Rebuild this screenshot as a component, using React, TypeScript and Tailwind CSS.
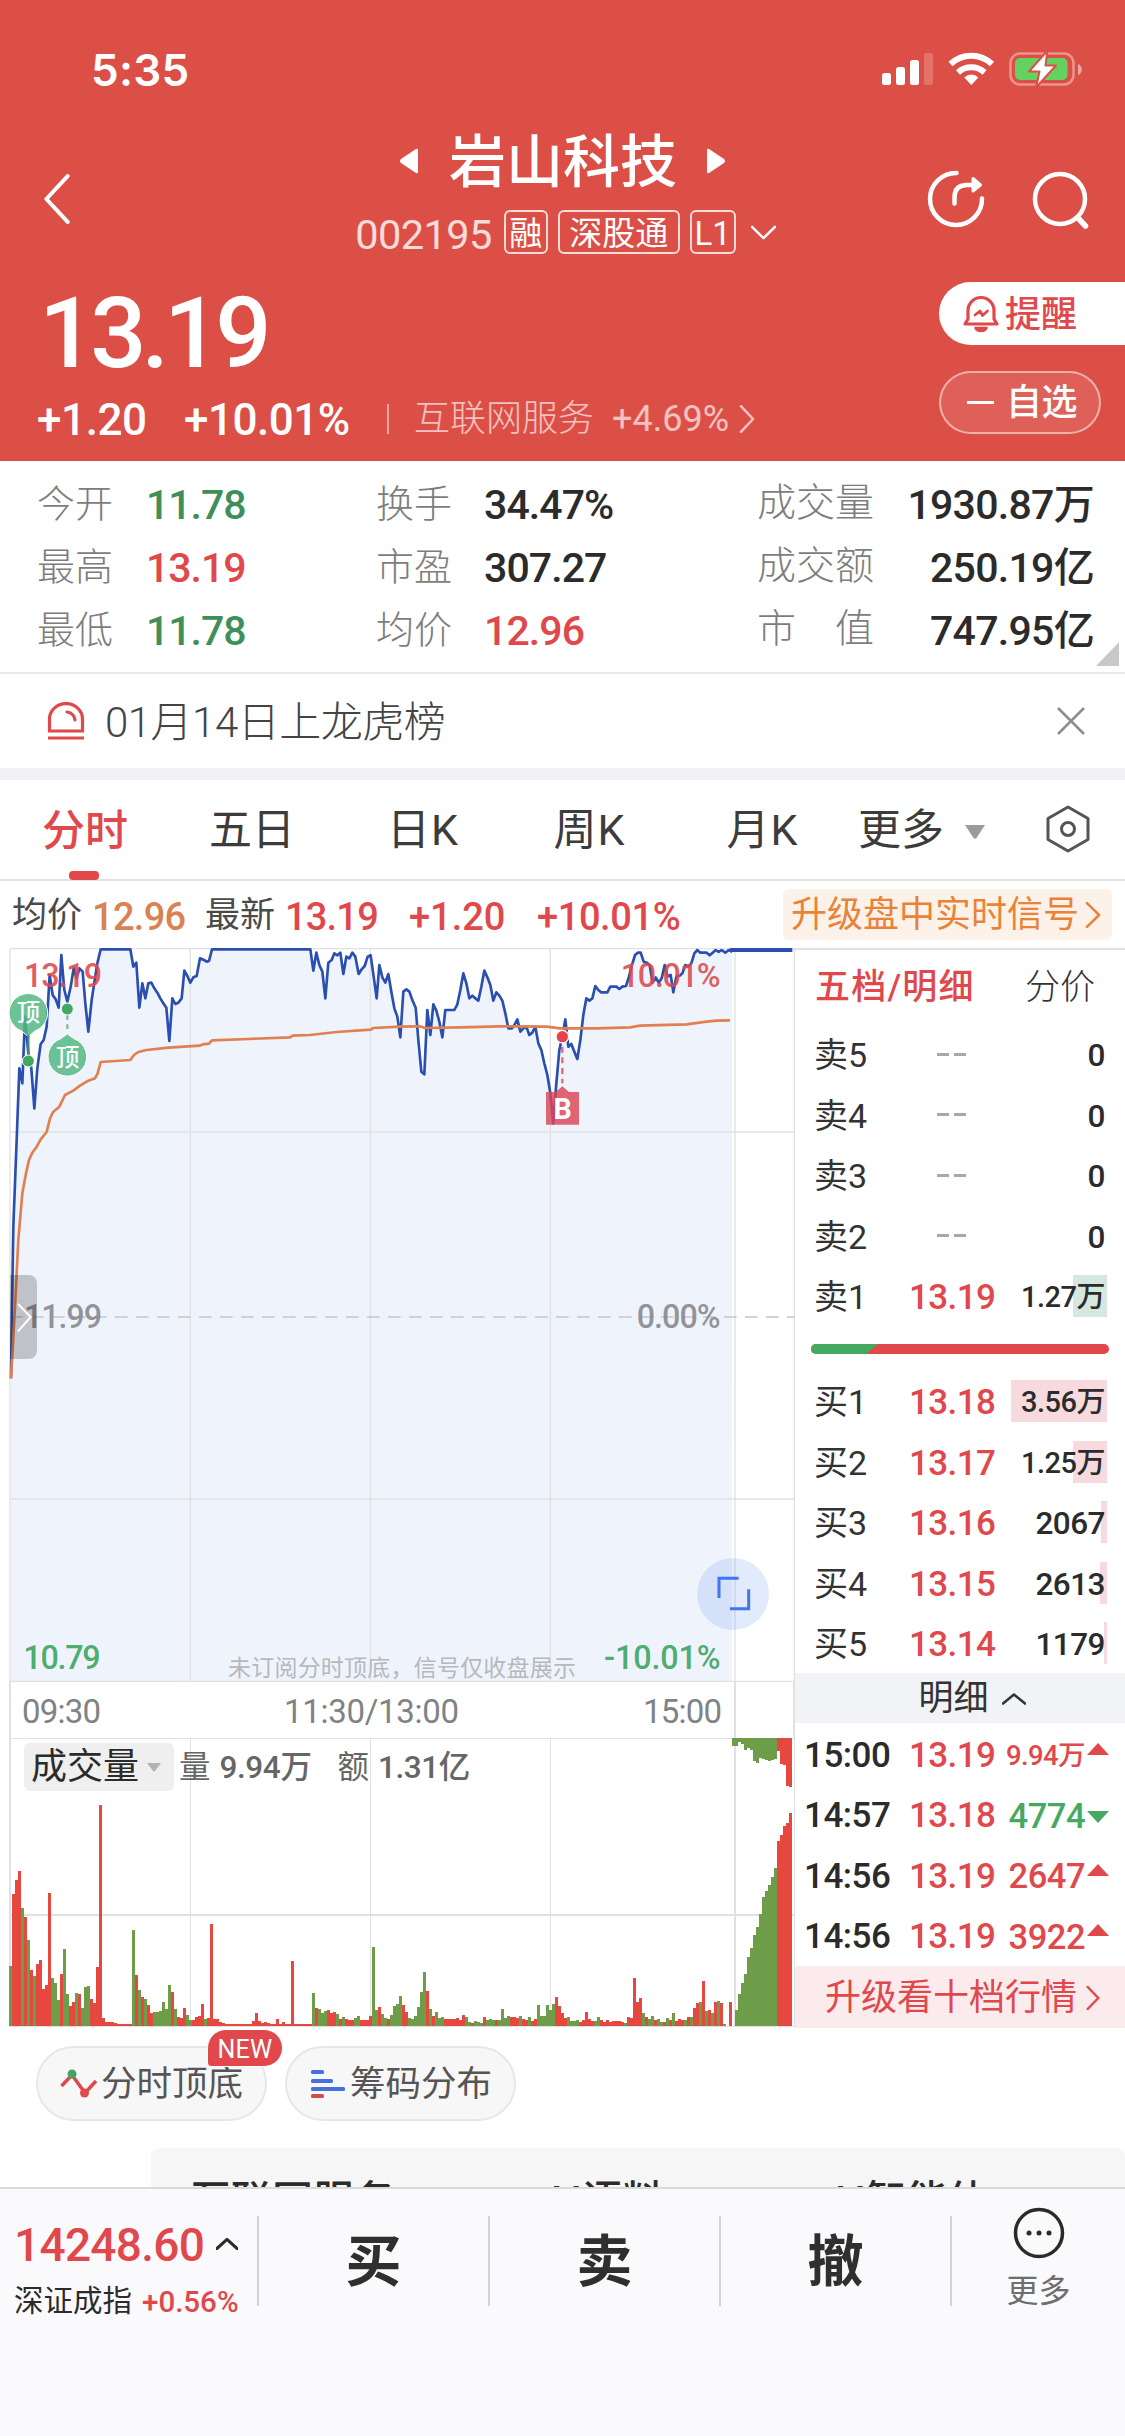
import type { ReactNode } from 'react'

type Tone = 'red' | 'green' | 'dark'

const toneClass: Record<Tone, string> = {
  red: 'text-[#e0484b]',
  green: 'text-[#3f8f5a]',
  dark: 'text-[#2b2b2b]',
}

// 行情概览
const stats: { label: string; value: string; tone: Tone }[][] = [
  [
    { label: '今开', value: '11.78', tone: 'green' },
    { label: '换手', value: '34.47%', tone: 'dark' },
    { label: '成交量', value: '1930.87万', tone: 'dark' },
  ],
  [
    { label: '最高', value: '13.19', tone: 'red' },
    { label: '市盈', value: '307.27', tone: 'dark' },
    { label: '成交额', value: '250.19亿', tone: 'dark' },
  ],
  [
    { label: '最低', value: '11.78', tone: 'green' },
    { label: '均价', value: '12.96', tone: 'red' },
    { label: '市　值', value: '747.95亿', tone: 'dark' },
  ],
]

const asks = [
  { label: '卖5', price: '--', vol: '0', bar: 0 },
  { label: '卖4', price: '--', vol: '0', bar: 0 },
  { label: '卖3', price: '--', vol: '0', bar: 0 },
  { label: '卖2', price: '--', vol: '0', bar: 0 },
  { label: '卖1', price: '13.19', vol: '1.27万', bar: 34 },
]

const bids = [
  { label: '买1', price: '13.18', vol: '3.56万', bar: 96 },
  { label: '买2', price: '13.17', vol: '1.25万', bar: 34 },
  { label: '买3', price: '13.16', vol: '2067', bar: 6 },
  { label: '买4', price: '13.15', vol: '2613', bar: 7 },
  { label: '买5', price: '13.14', vol: '1179', bar: 3 },
]

const ticks = [
  { time: '15:00', price: '13.19', vol: '9.94万', up: true },
  { time: '14:57', price: '13.18', vol: '4774', up: false },
  { time: '14:56', price: '13.19', vol: '2647', up: true },
  { time: '14:56', price: '13.19', vol: '3922', up: true },
]

// 分时线，单位为 1/3 像素
const pricePoints =
  '33,1315 36,1100 40,860 50,600 58,385 67,430 75,230 85,340 94,385 103,505 112,385 122,312 131,300 140,260 149,105 158,165 167,178 176,203 184,45 193,150 202,185 212,140 221,85 230,115 238,85 248,95 256,190 265,275 275,180 285,115 292,70 302,28 391,28 400,80 409,68 418,203 427,130 436,175 445,130 454,128 463,145 472,158 481,175 490,190 499,203 508,303 517,175 526,192 535,188 545,175 553,92 562,108 571,128 580,112 590,108 600,55 612,60 620,65 627,63 636,28 931,28 940,92 949,38 958,75 967,95 976,175 985,68 995,60 1003,40 1012,46 1021,38 1030,102 1039,50 1048,55 1057,38 1066,50 1076,102 1085,88 1094,78 1103,50 1112,46 1121,110 1130,175 1138,75 1147,112 1156,128 1165,102 1174,155 1183,205 1192,230 1201,292 1210,155 1219,148 1228,155 1237,180 1247,203 1255,300 1264,395 1273,403 1282,210 1291,285 1300,193 1309,212 1318,245 1327,292 1336,210 1363,210 1372,193 1381,150 1390,100 1399,130 1408,175 1417,167 1426,175 1435,182 1444,140 1453,92 1462,112 1471,135 1480,182 1489,157 1498,167 1507,182 1516,220 1525,265 1536,265 1543,255 1552,238 1561,275 1570,265 1579,260 1588,285 1597,278 1606,260 1615,310 1624,330 1633,370 1642,405 1651,460 1660,550 1669,430 1678,330 1687,290 1696,238 1705,320 1714,312 1723,335 1732,357 1741,300 1750,225 1759,175 1768,182 1777,175 1786,138 1795,150 1804,157 1822,157 1831,140 1849,140 1858,147 1867,140 1878,138 1887,110 1896,75 1905,45 1914,38 1922,38 1931,65 1940,68 1949,75 1958,128 1967,112 1976,128 1985,115 1994,75 2003,110 2012,105 2020,157 2029,110 2038,108 2047,100 2056,75 2065,80 2074,70 2083,40 2092,30 2101,38 2120,38 2129,46 2138,38 2147,30 2156,36 2165,30 2176,38 2186,30 2197,35'

const avgPoints =
  '33,1315 45,1100 55,900 67,760 78,700 87,660 96,640 110,620 122,598 140,576 150,535 160,515 178,500 195,465 220,452 240,437 265,422 285,415 293,400 302,366 391,360 402,345 415,336 440,330 505,323 600,317 608,313 627,311 636,301 745,297 870,292 878,287 930,285 1010,276 1112,269 1120,264 1200,260 1260,259 1275,264 1380,262 1500,259 1640,260 1680,265 1790,265 1890,262 1920,257 2060,253 2120,245 2150,242 2190,241'

// 每分钟成交量：颜色 + 柱高（1/3 像素）
const volumeBars =
  'g180 r396 r438 r466 g355 r328 g257 r167 g151 r186 r197 r112 r124 r399 g145 g128 g78 r156 g231 g96 r60 r72 g99 r96 g54 g118 g120 r82 r70 r176 r664 r23 r12 r12 r12 r9 r7 r7 r7 r7 r7 g288 r154 g109 r86 g80 r62 r40 g42 g42 g45 g73 g52 g122 r103 g50 r26 r23 r54 g33 g19 r19 r27 r30 r65 g22 r24 r306 r21 r21 r11 r9 r7 r7 r7 r7 r7 r7 r7 r7 r7 r15 r39 r15 r9 r12 r8 r7 r7 r22 r7 r12 r7 r7 r195 r7 r7 r7 r7 r7 r7 g98 r54 g51 g39 g44 r48 r38 r42 g36 r21 g27 r21 r18 r19 g24 g29 r17 r17 r17 r29 g238 g48 r57 g36 g24 r21 g33 g60 g66 g89 r63 r42 g24 g21 g31 g57 g102 g162 r105 g51 r29 g42 g23 g26 r20 r20 r20 r20 r24 r18 r33 g27 g12 r10 g14 g12 g10 r27 g18 g20 g19 r17 g17 g50 g24 g30 r26 r26 r25 g31 r22 r18 g27 r15 r20 g64 g30 g30 g63 g47 g65 r87 r60 r38 r25 g27 g14 g16 g19 r13 r18 r42 r20 r15 g14 g27 r18 r13 r17 r11 r16 r16 r14 r12 g10 r26 r24 r144 r72 r85 g40 r28 g22 g31 r18 g20 g13 r12 g25 r18 g39 r15 r22 r18 g17 r27 g28 r53 r68 g72 r136 g44 r48 g40 r72 g76 r68 g6 r0 r72'.split(' ')

// 收盘集合竞价
const auctionBars = 'g48 g96 g129 g156 g208 g234 g274 g296 g337 g386 g404 g424 g447 g474 r556 r574 r600 r610 r640'.split(' ')
const auctionTop = 'g25 g25 g13 g18 g37 g31 g37 g68 g75 g60 g62 g66 g70 g66 g64 r40 r78 r82 r144 r146'.split(' ')

const barFill = (bar: string) => (bar[0] === 'r' ? '#e6483f' : '#6d9d48')
const barSize = (bar: string) => Number(bar.slice(1))

function Chevron({ dir, className, stroke = 3 }: { dir: 'left' | 'right' | 'up' | 'down'; className: string; stroke?: number }) {
  const d = {
    left: 'M22 2L3 24L22 46',
    right: 'M3 2L22 24L3 46',
    up: 'M2 22L24 3L46 22',
    down: 'M2 3L24 22L46 3',
  }[dir]
  const tall = dir === 'left' || dir === 'right'
  return (
    <svg className={className} viewBox={tall ? '0 0 25 48' : '0 0 48 25'} preserveAspectRatio="none" fill="none">
      <path d={d} stroke="currentColor" strokeWidth={stroke} strokeLinecap="round" strokeLinejoin="round" vectorEffect="non-scaling-stroke" />
    </svg>
  )
}

function StatusBar() {
  return (
    <div className="flex h-[138px] items-center justify-between pl-[91px] pr-[42px]">
      <div className="pt-px font-['Inter'] text-[44px] font-semibold leading-none tracking-[0.3px]">5:35</div>
      <svg className="h-[40px] w-[202px]" viewBox="881 49 202 40" fill="none">
        <rect x="882" y="73" width="9" height="12" rx="2.5" fill="#fff" />
        <rect x="896" y="67" width="9" height="18" rx="2.5" fill="#fff" />
        <rect x="910" y="60" width="9" height="25" rx="2.5" fill="#fff" />
        <rect x="924" y="53" width="9" height="32" rx="2.5" fill="#fff" opacity=".2" />
        <path d="M950.500 64a30 30 0 0 1 41.500 0M958 72.500a19.500 19.500 0 0 1 26.500 0" stroke="#fff" strokeWidth="6" />
        <path d="M971.300 85l-7-7.500a9.700 9.700 0 0 1 14 0z" fill="#fff" />
        <rect x="1010.500" y="53.500" width="63" height="31" rx="9.500" stroke="#fff" strokeOpacity=".4" strokeWidth="2.500" />
        <path d="M1078 64c5 1.500 5 9.500 0 11z" fill="#fff" opacity=".5" />
        <rect x="1015" y="58" width="52.500" height="22" rx="5" fill="#65d15f" />
        <path d="M1047.500 50.500L1029 71.500h10.500L1036 87.500l20-22h-10.500z" fill="#fff" stroke="#dc4f47" strokeWidth="2" strokeLinejoin="round" />
      </svg>
    </div>
  )
}

function Tag({ children, className }: { children: ReactNode; className: string }) {
  return (
    <span className={`flex h-[44px] items-center justify-center rounded-[6px] border-2 border-white/80 pt-[3px] text-[33px] leading-none ${className}`}>
      {children}
    </span>
  )
}

function Header() {
  return (
    <header className="h-[461px] bg-[#dc4f47] text-white">
      <StatusBar />
      <div className="flex h-[122px] items-start justify-between pl-[43px] pr-[34px]">
        <div className="flex h-full w-[300px] items-center">
          <Chevron dir="left" className="h-[50px] w-[28px]" stroke={4} />
        </div>
        <div className="flex flex-col items-center">
          <div className="flex h-[46px] items-center">
            <svg className="h-[26px] w-[20px]" viewBox="0 0 20 26">
              <path d="M19 2v22q0 2-2 1L2 15q-2-2 0-4L17 1q2-1 2 1z" fill="#fff" />
            </svg>
            <h1 className="ml-[30px] mr-[29px] pt-[3px] text-[57px] font-medium leading-none">岩山科技</h1>
            <svg className="h-[26px] w-[20px]" viewBox="0 0 20 26">
              <path d="M1 2v22q0 2 2 1L18 15q2-2 0-4L3 1Q1 0 1 2z" fill="#fff" />
            </svg>
          </div>
          <div className="ml-[6px] mt-[25px] flex items-center">
            <span className="pt-[5px] text-[41.500px] leading-none tracking-[-0.6px] text-white/80">002195</span>
            <Tag className="ml-[12px] w-[44px]">融</Tag>
            <Tag className="ml-[10px] w-[122px]">深股通</Tag>
            <Tag className="ml-[10px] w-[46px]">L1</Tag>
            <Chevron dir="down" className="ml-[15px] h-[15px] w-[25px]" stroke={2.500} />
          </div>
        </div>
        <div className="flex h-full w-[309px] items-center justify-end gap-[42px]">
          <svg className="h-[62px] w-[62px]" viewBox="926 167 62 62" fill="none" stroke="#fff" strokeWidth="4.500" strokeLinecap="round" strokeLinejoin="round">
            <path d="M957.500 172A26 26 0 1 0 983 197.500" />
            <path d="M955.500 202.500v-6q0-12.500 12.500-12.500h8" />
            <path d="M974 177.500l7.500 6.500-7.500 6z" fill="#fff" strokeWidth="3" />
          </svg>
          <svg className="h-[62px] w-[62px]" viewBox="1028 168 62 62" fill="none" stroke="#fff" strokeWidth="4.500" strokeLinecap="round">
            <circle cx="1059" cy="199" r="25" />
            <path d="M1077 218l7.500 8" strokeWidth="5.500" />
          </svg>
        </div>
      </div>
      <div className="flex justify-between">
        <div className="pt-[24px]">
          <div className="pl-[39px] text-[99px] font-medium leading-[98px] tracking-[-5px]">13.19</div>
          <div className="mt-[15px] flex h-[46px] items-center pl-[37px] leading-none">
            <span className="w-[147px] text-[44px] font-medium tracking-[-0.4px]">+1.20</span>
            <span className="w-[203px] text-[44px] font-medium tracking-[-0.5px]">+10.01%</span>
            <i className="-mt-[3px] h-[30px] w-[2px] bg-white/50" />
            <div className="-mt-[2px] ml-[25px] flex items-center text-white/65">
              <span className="text-[36px] font-light">互联网服务</span>
              <span className="ml-[18px] text-[36px]">+4.69%</span>
              <Chevron dir="right" className="ml-[10px] h-[28px] w-[16px]" stroke={2.500} />
            </div>
          </div>
        </div>
        <div className="w-[186px] pt-[22px]">
          <div className="flex h-[63px] items-center rounded-l-full bg-white pl-[24px] text-[#e0484b]">
            <svg className="h-[38px] w-[36px]" viewBox="0 0 36 38" fill="none" stroke="currentColor" strokeWidth="3.200" strokeLinecap="round" strokeLinejoin="round">
              <path d="M5 24V15.500a13 13 0 0 1 26 0V24l3 5H2z" />
              <path d="M12 32.500a6 4 0 0 0 12 0z" fill="currentColor" strokeWidth="1.500" />
              <path d="M12 20l5-4 2.500 4.500 5-4.500" strokeWidth="2.800" />
            </svg>
            <span className="ml-[6px] pt-[2px] text-[36px] font-medium leading-none">提醒</span>
          </div>
          <div className="mt-[26px] flex h-[63px] w-[162px] items-center rounded-full border-2 border-white/50 bg-white/10 pl-[26px]">
            <i className="h-[3px] w-[27px] bg-white" />
            <span className="ml-[12px] pt-px text-[36px] font-medium leading-none tracking-[-0.5px]">自选</span>
          </div>
        </div>
      </div>
    </header>
  )
}

function Stats() {
  return (
    <section className="relative h-[213px] border-b-2 border-[#e9e9e9] pt-[11px]">
      {stats.map((row, i) => (
        <div key={i} className="flex h-[63px] items-center pl-[37px] pr-[31px] leading-none">
          <span className="w-[109px] text-[38px] font-light text-[#7d7d7d]">{row[0].label}</span>
          <span className={`w-[230px] pt-[3px] text-[41px] font-medium tracking-[-1px] ${toneClass[row[0].tone]}`}>{row[0].value}</span>
          <span className="w-[108px] text-[38px] font-light text-[#7d7d7d]">{row[1].label}</span>
          <span className={`w-[273px] pt-[3px] text-[41px] font-medium tracking-[-0.9px] ${toneClass[row[1].tone]}`}>{row[1].value}</span>
          <span className="text-[39px] font-light text-[#7d7d7d]">{row[2].label}</span>
          <span className={`ml-auto pt-[3px] text-[41px] font-medium tracking-[-0.7px] ${toneClass[row[2].tone]}`}>{row[2].value}</span>
        </div>
      ))}
      <svg className="absolute bottom-[6px] right-[6px] h-[24px] w-[23px]" viewBox="0 0 23 24">
        <path d="M23 0v24H0z" fill="#c8c8c8" />
      </svg>
    </section>
  )
}

function Notice() {
  return (
    <div className="flex h-[106px] items-center border-b-[12px] border-[#f1f2f5] pl-[47px] pr-[40px]">
      <svg className="h-[38px] w-[38px]" viewBox="0 0 38 38" fill="none" stroke="#e0484b" strokeWidth="3.200">
        <path d="M2.500 29V17a16 15 0 0 1 33 0v12zM1 36h36" />
        <path d="M20 10q7 1 8 8" strokeLinecap="round" />
      </svg>
      <span className="ml-[20px] pt-[3px] text-[42px] font-light leading-none tracking-[-0.5px] text-[#444]">01月14日上龙虎榜</span>
      <svg className="ml-auto h-[28px] w-[28px]" viewBox="0 0 28 28" stroke="#8d8d8d" strokeWidth="2.500">
        <path d="M1 1l26 26M27 1L1 27" />
      </svg>
    </div>
  )
}

function Tabs() {
  return (
    <nav className="flex h-[101px] items-center border-b-2 border-[#e1e1e1] pt-[2px] text-[43px] leading-none text-[#3c3c3c]">
      <div className="relative -mt-[2px] flex h-[101px] w-[170px] items-center justify-center pt-[4px] font-medium text-[#e0484b]">
        分时
        <i className="absolute bottom-0 left-[69px] h-[9px] w-[30px] rounded-[4px] bg-[#e0484b]" />
      </div>
      <div className="w-[164px] text-center">五日</div>
      <div className="w-[178px] text-center tracking-[1px]">日K</div>
      <div className="w-[155px] text-center tracking-[1px]">周K</div>
      <div className="w-[191px] text-center tracking-[1px]">月K</div>
      <div className="w-[88px]">更多</div>
      <svg className="ml-[18px] mt-[2px] h-[14px] w-[22px]" viewBox="0 0 22 14">
        <path d="M1 0h20L12.500 13q-1.500 1.500-3 0z" fill="#9b9b9b" />
      </svg>
      <svg className="-mt-[3px] ml-[60px] h-[48px] w-[44px]" viewBox="0 0 44 48" fill="none" stroke="#555" strokeWidth="3">
        <path d="M22 2l20 11.500v21L22 46 2 34.500v-21z" strokeLinejoin="round" />
        <circle cx="22" cy="24" r="6.500" />
      </svg>
    </nav>
  )
}

function QuoteLine() {
  return (
    <div className="flex h-[67px] items-center pl-[12px] pr-[13px] text-[35px] leading-none">
      <span className="w-[80px] pt-px text-[#4a4a4a]">均价</span>
      <span className="w-[113px] pt-[4px] text-[38px] font-medium tracking-[-0.7px] text-[#d98253]">12.96</span>
      <span className="w-[80px] pt-px text-[#4a4a4a]">最新</span>
      <span className="w-[124px] pt-[4px] text-[38px] font-medium tracking-[-0.8px] text-[#e0484b]">13.19</span>
      <span className="w-[128px] pt-[4px] text-[38px] font-medium text-[#e0484b]">+1.20</span>
      <span className="pt-[4px] text-[38px] font-medium tracking-[-0.4px] text-[#e0484b]">+10.01%</span>
      <div className="ml-auto flex h-[51px] w-[329px] items-center rounded-[6px] bg-[#fdf2ea] pl-[8px] pt-px text-[36px] text-[#e98338]">
        升级盘中实时信号
        <Chevron dir="right" className="ml-[6px] h-[26px] w-[16px]" stroke={2.500} />
      </div>
    </div>
  )
}

function PriceChart() {
  return (
    <div className="relative h-[734px]">
      <svg className="h-[734px] w-[795px]" viewBox="0 24 2385 2202" fill="none">
        <polygon points={`33,2226 ${pricePoints} 2195,2226`} fill="#eff4fc" />
        <g stroke="#e0e1e4" strokeWidth="4">
          <path d="M30 26H2385M30 576H2385M30 1677H2385M30 2224H2385" />
          <path d="M30 26V2226M571 26V2226M1111 26V2226M1651 26V2226M2205 26V2226M2383 26V2226" />
        </g>
        <path d="M30 1131H2385" stroke="#c4c6ca" strokeWidth="4" strokeDasharray="38 25" />
        <polyline points={pricePoints} stroke="#2a4fb0" strokeWidth="8" strokeLinejoin="round" />
        <path d="M2190 30H2377" stroke="#2a4fb0" strokeWidth="12" />
        <polyline points={avgPoints} stroke="#e07f50" strokeWidth="8" strokeLinejoin="round" />
        <g fontFamily="Roboto" fontSize="97" fontWeight="500" fillOpacity=".9">
          <g fill="#e0484b">
            <text x="72" y="141" textLength="234">13.19</text>
            <text x="1862" y="141" textLength="300">10.01%</text>
          </g>
          <g fill="#85878b">
            <text x="72" y="1165" textLength="234">11.99</text>
            <text x="1910" y="1165" textLength="252">0.00%</text>
          </g>
          <g fill="#38a35c">
            <text x="70" y="2186" textLength="232">10.79</text>
            <text x="1812" y="2186" textLength="350">-10.01%</text>
          </g>
        </g>
        <text x="684" y="2208" textLength="1044" fontFamily="'Noto Sans CJK SC'" fontSize="69" fill="#b6b8bc">
          未订阅分时顶底，信号仅收盘展示
        </text>

        {/* 顶部信号 */}
        <g stroke="#fff" strokeWidth="3">
          <path d="M85 290L65 273A58 58 0 1 1 105 273z" fill="#53b984" fillOpacity=".85" />
          <path d="M202 282L222 296A58 58 0 1 1 182 296z" fill="#53b984" fillOpacity=".85" />
        </g>
        <path d="M202 225V275" stroke="#8bb79d" strokeWidth="7" strokeDasharray="14 14" />
        <path d="M85 285V345" stroke="#3f8a6c" strokeWidth="7" />
        <circle cx="85" cy="363" r="18" fill="#42a860" stroke="#fff" strokeWidth="3" />
        <circle cx="202" cy="207" r="18" fill="#42a860" stroke="#fff" strokeWidth="3" />
        <g fontFamily="'Noto Sans CJK SC'" fontSize="70" fontWeight="500" fill="#fff" textAnchor="middle">
          <text x="85" y="244">顶</text>
          <text x="203" y="377">顶</text>
        </g>

        {/* 买点 */}
        <path d="M1687 320V430" stroke="#e0687a" strokeWidth="7" strokeDasharray="18 14" />
        <path d="M1638 456H1667L1687 439L1707 456H1737V554H1638z" fill="#dd4656" fillOpacity=".82" />
        <text x="1688" y="536" fontFamily="Roboto" fontSize="86" fontWeight="700" fill="#fff" textAnchor="middle">B</text>
        <circle cx="1687" cy="290" r="19" fill="#e6444a" stroke="#fff" strokeWidth="4" />

        {/* 侧边拉手 */}
        <path d="M30 1005H84q27 0 27 27V1230q0 27-27 27H30z" fill="#000" fillOpacity=".2" />
        <path d="M54 1092L92 1131L54 1174" stroke="#fff" strokeWidth="6" />

        {/* 全屏 */}
        <circle cx="2199" cy="1962" r="108" fill="#3b78e8" fillOpacity=".15" />
        <path d="M2216 1915H2157V1974M2190 2006H2246V1948" stroke="#3f76f2" strokeWidth="9" />
      </svg>
    </div>
  )
}

function VolumeChart() {
  return (
    <div className="relative h-[289px]">
      <svg className="h-[289px] w-[795px]" viewBox="0 54 2385 867" fill="none" shapeRendering="crispEdges">
        <g stroke="#e0e1e4" strokeWidth="4">
          <path d="M30 56H2385M30 585H2385M30 919H2385" />
          <path d="M30 54V921M571 54V921M1111 54V921M1651 54V921M2205 54V921M2383 54V921" />
        </g>
        {volumeBars.map((bar, i) => (
          <rect key={i} x={28 + i * 9} y={918 - barSize(bar)} width="9" height={barSize(bar)} fill={barFill(bar)} />
        ))}
        {auctionBars.map((bar, i) => (
          <rect key={i} x={2205 + i * 9} y={918 - barSize(bar)} width="9" height={barSize(bar)} fill={barFill(bar)} />
        ))}
        {auctionTop.map((bar, i) => (
          <rect key={i} x={2196 + i * 9} y="54" width="9" height={barSize(bar)} fill={barFill(bar)} />
        ))}
      </svg>
      <div className="absolute left-[24px] top-[5px] flex h-[48px] items-center text-[31.500px] leading-none text-[#666]">
        <div className="flex h-[48px] w-[150px] items-center rounded-[6px] bg-[#efefef] pl-[7px] text-[36px] text-[#2b2b2b]">
          成交量
          <svg className="ml-[8px] h-[9px] w-[14px]" viewBox="0 0 14 9">
            <path d="M0 0h14L8 8q-1 1-2 0z" fill="#b3b3b3" />
          </svg>
        </div>
        <span className="ml-[5px] pt-[2px]">量</span>
        <span className="ml-[9px] pt-[2px] font-medium tracking-[-0.4px]">9.94万</span>
        <span className="ml-[26px] pt-[2px]">额</span>
        <span className="ml-[9px] pt-[2px] font-medium tracking-[-0.4px]">1.31亿</span>
      </div>
    </div>
  )
}

function BookRow({ row, side }: { row: (typeof asks)[number]; side: 'ask' | 'bid' }) {
  const empty = row.price === '--'
  const small = row.vol.includes('万')
  return (
    <div className="relative flex h-[60.500px] items-center pl-[19px] pr-[20px] leading-none">
      <i
        className={`absolute right-[18px] top-[9px] h-[42px] ${side === 'ask' ? 'bg-[#d5e8df]' : 'bg-[#f6dadd]'}`}
        style={{ width: row.bar }}
      />
      <span className="relative w-[95px] pt-[2px] text-[34px] text-[#333]">{row.label}</span>
      {empty ? (
        <span className="ml-[28px] flex gap-[5px]">
          <i className="h-[3px] w-[12px] bg-[#a5a8ad]" />
          <i className="h-[3px] w-[12px] bg-[#a5a8ad]" />
        </span>
      ) : (
        <span className="relative pt-[3px] text-[35px] font-medium tracking-[-0.6px] text-[#e0484b]">{row.price}</span>
      )}
      <span
        className={`relative ml-auto pt-[3px] font-medium text-[#2b2b2b] ${small ? 'text-[29px] tracking-[-0.5px]' : 'text-[31.500px] tracking-[-0.5px]'}`}
      >
        {row.vol}
      </span>
    </div>
  )
}

function OrderBook() {
  return (
    <aside className="h-[1080px] w-[330px] border-t-2 border-[#e0e1e4]">
      <div className="flex h-[74px] items-center pl-[20px] pr-[30px] text-[35px] leading-none">
        <span className="font-medium tracking-[1.2px] text-[#e0484b]">五档/明细</span>
        <span className="ml-auto font-light text-[#333]">分价</span>
      </div>
      {asks.map((row) => (
        <BookRow key={row.label} row={row} side="ask" />
      ))}
      <div className="flex h-[44.500px] items-center pl-[16px]">
        <svg className="h-[10px] w-[298px] rounded-full" viewBox="0 0 298 10">
          <rect width="298" height="10" fill="#e0484b" />
          <path d="M0 0h67L55 10H0z" fill="#46a962" />
        </svg>
      </div>
      {bids.map((row) => (
        <BookRow key={row.label} row={row} side="bid" />
      ))}
      <div className="-mt-px flex h-[50px] items-center justify-center bg-[#f1f3f6] pl-[24px] pt-[2px] text-[35px] leading-none text-[#333]">
        明细
        <Chevron dir="up" className="ml-[13px] h-[12px] w-[24px]" stroke={2.500} />
      </div>
      <div className="pt-px">
        {ticks.map((tick, i) => (
          <div key={i} className="flex h-[60.500px] items-center pl-[9px] pr-[16px] leading-none">
            <span className="w-[105px] pt-[3px] text-[35px] font-medium tracking-[-0.5px] text-[#2b2b2b]">{tick.time}</span>
            <span className="pt-[3px] text-[35px] font-medium tracking-[-0.6px] text-[#e0484b]">{tick.price}</span>
            <span
              className={`ml-auto whitespace-nowrap pt-[3px] font-medium ${
                tick.vol.includes('万') ? 'text-[27.500px] tracking-[-0.6px]' : 'text-[34.500px] tracking-[-0.5px]'
              } ${tick.up ? 'text-[#e0484b]' : 'text-[#46a962]'}`}
            >
              {tick.vol}
            </span>
            <svg className={`ml-[2px] h-[12px] w-[22px] shrink-0 ${tick.up ? '-mt-[10px]' : 'mt-[5px]'}`} viewBox="0 0 22 12">
              <path d={tick.up ? 'M0 12L11 0L22 12z' : 'M0 0L11 12L22 0z'} fill={tick.up ? '#e0484b' : '#46a962'} />
            </svg>
          </div>
        ))}
      </div>
      <div className="flex h-[62px] items-center bg-[#fbebec] pl-[30px] pt-[2px] text-[36px] leading-none text-[#e0484b]">
        升级看十档行情
        <Chevron dir="right" className="ml-[9px] h-[24px] w-[14px]" stroke={2.500} />
      </div>
    </aside>
  )
}

function Indicators() {
  return (
    <div className="flex h-[102px] gap-[18px] pl-[36px] pt-[18px] text-[35.500px] leading-none text-[#555]">
      <div className="relative flex h-[75px] w-[231px] items-center rounded-full border-2 border-[#e7e7e8] bg-[#f7f7f7] pl-[22px]">
        <svg className="h-[32px] w-[38px]" viewBox="0 0 38 32" fill="none" stroke="#dd4a4c" strokeWidth="3.500">
          <path d="M1.500 18L12 7l13 18L36 13" />
          <circle cx="12" cy="6" r="4.500" fill="#43a565" stroke="none" />
          <circle cx="24.500" cy="25" r="4.500" fill="#dd4a4c" stroke="none" />
        </svg>
        <span className="ml-[3px] pt-[3px]">分时顶底</span>
        <span className="absolute -top-[19px] left-[169px] flex h-[38px] w-[76px] items-center justify-center rounded-[19px] rounded-bl-[4px] border border-white bg-[#e0484b] pt-[2px] text-[25px] tracking-[0.3px] text-white">
          NEW
        </span>
      </div>
      <div className="flex h-[75px] w-[231px] items-center rounded-full border-2 border-[#e7e7e8] bg-[#f7f7f7] pl-[23px]">
        <svg className="h-[30px] w-[36px]" viewBox="0 0 36 30">
          <rect x="1" y="1" width="13" height="4" rx="1.500" fill="#4570e0" />
          <rect x="1" y="10" width="22" height="4" rx="1.500" fill="#4570e0" />
          <rect x="1" y="18" width="34" height="4" rx="1.500" fill="#4570e0" />
          <rect x="1" y="25" width="13" height="4" rx="1.500" fill="#cf4d50" />
        </svg>
        <span className="ml-[4px] pt-[3px]">筹码分布</span>
      </div>
    </div>
  )
}

function BottomBar() {
  return (
    <footer className="flex h-[249px] items-start border-t-2 border-[#dadada] bg-[#fafafc] leading-none">
      <div className="w-[257px] pl-[14px] pt-[33px]">
        <div className="flex items-center">
          <span className="text-[46px] font-medium tracking-[-0.7px] text-[#e0484b]">14248.60</span>
          <Chevron dir="up" className="-mt-[3px] ml-[12px] h-[12px] w-[22px] text-[#2b2b2b]" stroke={3} />
        </div>
        <div className="mt-[18px] flex items-center whitespace-nowrap">
          <span className="text-[29.500px] text-[#2b2b2b]">深证成指</span>
          <span className="ml-[10px] pt-[2px] text-[29.500px] font-medium text-[#e0484b]">+0.56%</span>
        </div>
      </div>
      {['买', '卖', '撤'].map((name) => (
        <div key={name} className="mt-[27px] flex h-[90px] w-[231px] items-center justify-center border-l-2 border-[#d3d3d5] pt-[2px] text-[56px] font-bold text-[#2f2f2f]">
          {name}
        </div>
      ))}
      <div className="mt-[27px] h-[90px] w-[2px] bg-[#d3d3d5]" />
      <div className="flex flex-1 flex-col items-center pt-[18px]">
        <svg className="h-[52px] w-[52px]" viewBox="0 0 52 52">
          <circle cx="26" cy="26" r="23.500" fill="none" stroke="#2b2b2b" strokeWidth="3.500" />
          <circle cx="16" cy="26" r="2.500" fill="#2b2b2b" />
          <circle cx="26" cy="26" r="2.500" fill="#2b2b2b" />
          <circle cx="36" cy="26" r="2.500" fill="#2b2b2b" />
        </svg>
        <span className="mt-[16px] text-[32px] text-[#6e6e6e]">更多</span>
      </div>
    </footer>
  )
}

export default function App() {
  return (
    <div className="h-[2436px] w-[1125px] overflow-hidden bg-white font-['Roboto','Noto_Sans_CJK_SC',sans-serif]">
      <Header />
      <Stats />
      <Notice />
      <Tabs />
      <QuoteLine />
      <div className="flex">
        <div className="w-[795px]">
          <PriceChart />
          <div className="ml-[9px] flex h-[56px] items-center border-x-2 border-[#e0e1e4] pl-[11px] text-[33px] leading-none tracking-[-0.8px] text-[#808286]">
            <span className="w-[262px] pt-[3px]">09:30</span>
            <span className="w-[359px] pt-[3px] tracking-[-0.3px]">11:30/13:00</span>
            <span className="w-[91px] pt-[3px]">15:00</span>
            <i className="h-full w-[2px] bg-[#e0e1e4]" />
          </div>
          <VolumeChart />
        </div>
        <OrderBook />
      </div>
      <Indicators />
      {/* 关联板块 */}
      <div className="mt-[18px] h-[39px] overflow-hidden pl-[151px]">
        <div className="flex h-[80px] rounded-[9px] bg-[#f6f6f6] pl-[39px] pt-[33px] text-[41px] font-medium leading-none text-[#2b2b2b]">
          <span className="w-[353px]">互联网服务</span>
          <span className="w-[284px]">AI语料</span>
          <span>AI智能体</span>
        </div>
      </div>
      <BottomBar />
    </div>
  )
}
